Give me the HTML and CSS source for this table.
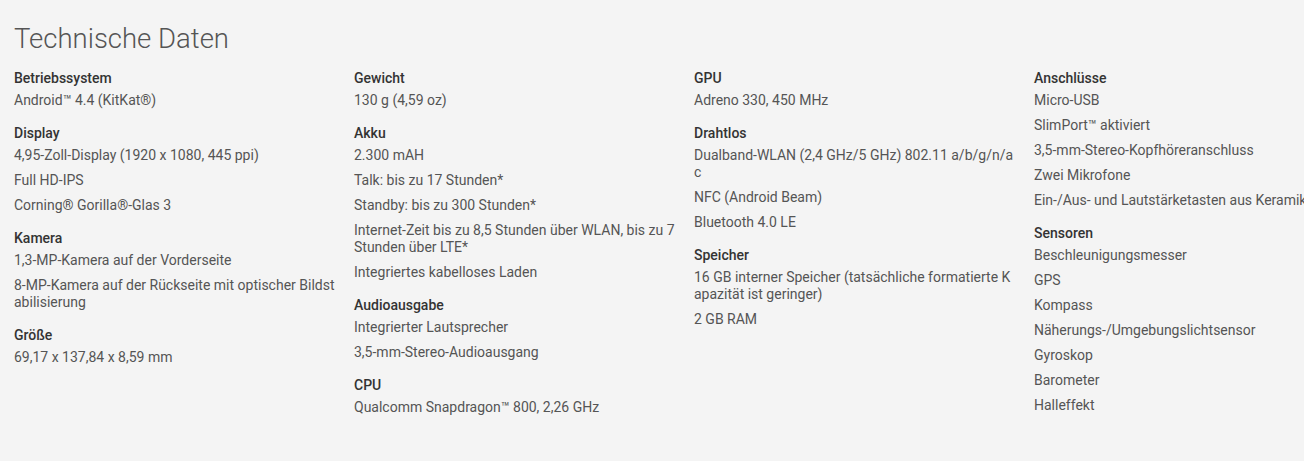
FILE: index.html
```html
<!DOCTYPE html>
<html lang="de">
<head>
<meta charset="utf-8">
<title>Technische Daten</title>
<link rel="stylesheet" href="styles.css">
</head>
<body>
<section class="specs">
  <h1 class="title">Technische Daten</h1>
  <div class="grid">
    <div class="col">
      <div class="group">
        <h2 class="label">Betriebssystem</h2>
        <p class="item">Android™ 4.4 (KitKat®)</p>
      </div>
      <div class="group">
        <h2 class="label">Display</h2>
        <p class="item">4,95-Zoll-Display (1920 x 1080, 445 ppi)</p>
        <p class="item">Full HD-IPS</p>
        <p class="item">Corning® Gorilla®-Glas 3</p>
      </div>
      <div class="group">
        <h2 class="label">Kamera</h2>
        <p class="item">1,3-MP-Kamera auf der Vorderseite</p>
        <p class="item">8-MP-Kamera auf der Rückseite mit optischer Bildstabilisierung</p>
      </div>
      <div class="group">
        <h2 class="label">Größe</h2>
        <p class="item">69,17 x 137,84 x 8,59 mm</p>
      </div>
    </div>
    <div class="col">
      <div class="group">
        <h2 class="label">Gewicht</h2>
        <p class="item">130 g (4,59 oz)</p>
      </div>
      <div class="group">
        <h2 class="label">Akku</h2>
        <p class="item">2.300 mAH</p>
        <p class="item">Talk: bis zu 17 Stunden*</p>
        <p class="item">Standby: bis zu 300 Stunden*</p>
        <p class="item">Internet-Zeit bis zu 8,5 Stunden über WLAN, bis zu 7 Stunden über LTE*</p>
        <p class="item">Integriertes kabelloses Laden</p>
      </div>
      <div class="group">
        <h2 class="label">Audioausgabe</h2>
        <p class="item">Integrierter Lautsprecher</p>
        <p class="item">3,5-mm-Stereo-Audioausgang</p>
      </div>
      <div class="group">
        <h2 class="label">CPU</h2>
        <p class="item">Qualcomm Snapdragon™ 800, 2,26 GHz</p>
      </div>
    </div>
    <div class="col">
      <div class="group">
        <h2 class="label">GPU</h2>
        <p class="item">Adreno 330, 450 MHz</p>
      </div>
      <div class="group">
        <h2 class="label">Drahtlos</h2>
        <p class="item">Dualband-WLAN (2,4 GHz/5 GHz) 802.11 a/b/g/n/ac</p>
        <p class="item">NFC (Android Beam)</p>
        <p class="item">Bluetooth 4.0 LE</p>
      </div>
      <div class="group">
        <h2 class="label">Speicher</h2>
        <p class="item">16 GB interner Speicher (tatsächliche formatierte Kapazität ist geringer)</p>
        <p class="item">2 GB RAM</p>
      </div>
    </div>
    <div class="col">
      <div class="group">
        <h2 class="label">Anschlüsse</h2>
        <p class="item">Micro-USB</p>
        <p class="item">SlimPort™ aktiviert</p>
        <p class="item">3,5-mm-Stereo-Kopfhöreranschluss</p>
        <p class="item">Zwei Mikrofone</p>
        <p class="item">Ein-/Aus- und Lautstärketasten aus Keramik</p>
      </div>
      <div class="group">
        <h2 class="label">Sensoren</h2>
        <p class="item">Beschleunigungsmesser</p>
        <p class="item">GPS</p>
        <p class="item">Kompass</p>
        <p class="item">Näherungs-/Umgebungslichtsensor</p>
        <p class="item">Gyroskop</p>
        <p class="item">Barometer</p>
        <p class="item">Halleffekt</p>
      </div>
    </div>
  </div>
</section>
</body>
</html>
```
FILE: styles.css
```css
html, body {
  margin: 0;
  padding: 0;
  background: #f4f4f4;
  overflow: hidden;
}
body {
  font-family: Roboto, "Liberation Sans", Arial, sans-serif;
  color: #555;
}
.specs {
  padding: 19px 0 0 14px;
  width: 1400px;
}
.title {
  margin: 0 0 11px 0;
  font-size: 27.5px;
  font-weight: 300;
  line-height: 40px;
  color: #555;
}
.grid {
  display: grid;
  grid-template-columns: repeat(4, 322px);
  column-gap: 18px;
  align-items: start;
}
.group {
  padding-bottom: 8px;
}
.label {
  margin: 0 0 5px 0;
  font-size: 14px;
  font-weight: 500;
  line-height: 17px;
  color: #333;
}
.item {
  margin: 0 0 8px 0;
  font-size: 14px;
  font-weight: 400;
  line-height: 17px;
  color: #555;
  word-break: break-all;
}
```
